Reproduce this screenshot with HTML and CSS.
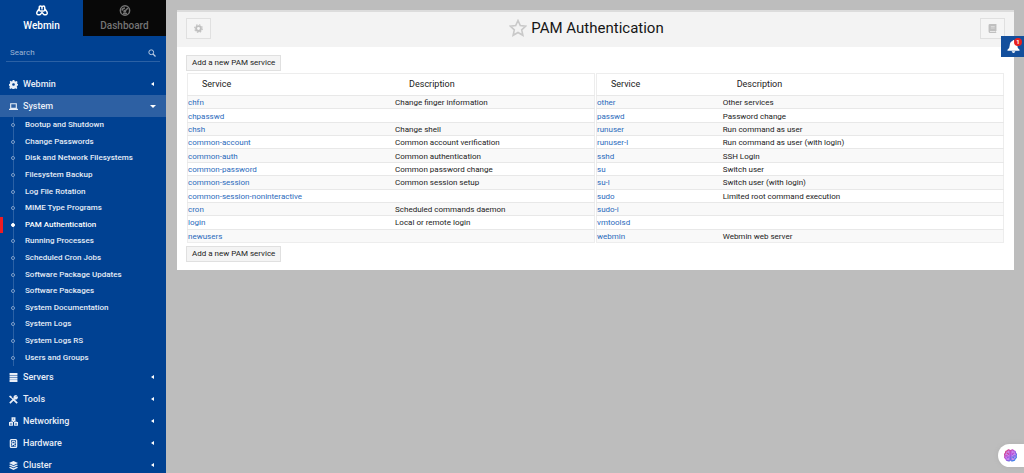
FILE: index.html
```html
<!DOCTYPE html>
<html lang="en">
<head>
<meta charset="utf-8">
<title>PAM Authentication</title>
<link rel="stylesheet" href="styles.css">
</head>
<body>
<div class="app">
<aside class="sidebar">
  <nav class="tabs">
    <a class="tab tab-active" href="#">
      <svg class="tab-icon" viewBox="0 0 24 22" fill="none" stroke="currentColor" stroke-width="2.800" stroke-linejoin="round"><path d="M6.500 12V4.500Q6.500 2 9 2t3 2.500Q12.500 2 15 2t2.500 2.500V12M6 8l-4 6q-1.500 4 1 5t5.500 0l3.500-4 3.500 4q3 1 5.500 0t1-5l-4-6M7 12h10M12 4v5"/></svg>
      <span>Webmin</span>
    </a>
    <a class="tab tab-dark" href="#">
      <svg class="tab-icon" viewBox="0 0 24 22" fill="none" stroke="currentColor" stroke-width="3"><circle cx="12" cy="11" r="9.300"/><path d="M11 13l7-7M6 11q1-5 6-5M8 17h8"/><circle cx="11.500" cy="12.500" r="1.500"/></svg>
      <span>Dashboard</span>
    </a>
  </nav>
  <form class="search">
    <input class="search-input" type="search" placeholder="Search" aria-label="Search">
    <button class="search-button" type="button" aria-label="Run search"><svg class="search-icon" viewBox="0 0 16 16" fill="none" stroke="currentColor" stroke-width="2"><circle cx="6.500" cy="6.500" r="4.800"/><path d="M10 10l5 5" stroke-width="2.600"/></svg></button>
  </form>
  <nav class="menu">
    <a class="item" href="#"><svg class="icon" viewBox="0 0 16 16" fill="currentColor"><path fill-rule="evenodd" d="M6.500 0h3l.5 2 1.500.7 2-1 1.800 1.800-1 2 .7 1.500 1 .3v2.500l-1.500.5-.7 1.700 1 2-1.800 1.800-2-1-1.500.7-.5 1.500h-2.500l-.5-1.500-1.700-.7-2 1-1.800-1.800 1-2L1 10.500l-1-.5V7l1.500-.5.7-1.500-1-1.700L3 1.500l1.700 1L6 2zM8 5.600a2.400 2.400 0 100 4.800 2.400 2.400 0 000-4.800z"/></svg><span>Webmin</span><i class="caret"></i></a>
    <a class="item item-open" href="#"><svg class="icon" viewBox="0 0 16 16" fill="none" stroke="currentColor" stroke-width="2"><path d="M3 3h10v8H3zM0 13h16"/></svg><span>System</span><i class="caret caret-down"></i></a>
    <ul class="submenu">
      <li class="sub"><a href="#">Bootup and Shutdown</a></li>
      <li class="sub"><a href="#">Change Passwords</a></li>
      <li class="sub"><a href="#">Disk and Network Filesystems</a></li>
      <li class="sub"><a href="#">Filesystem Backup</a></li>
      <li class="sub"><a href="#">Log File Rotation</a></li>
      <li class="sub"><a href="#">MIME Type Programs</a></li>
      <li class="sub sub-active"><a href="#">PAM Authentication</a></li>
      <li class="sub"><a href="#">Running Processes</a></li>
      <li class="sub"><a href="#">Scheduled Cron Jobs</a></li>
      <li class="sub"><a href="#">Software Package Updates</a></li>
      <li class="sub"><a href="#">Software Packages</a></li>
      <li class="sub"><a href="#">System Documentation</a></li>
      <li class="sub"><a href="#">System Logs</a></li>
      <li class="sub"><a href="#">System Logs RS</a></li>
      <li class="sub"><a href="#">Users and Groups</a></li>
    </ul>
    <a class="item" href="#"><svg class="icon" viewBox="0 0 16 16" fill="currentColor"><path d="M1 0h14v4H1zM1 4.700h14v3H1zM1 8.400h14v3H1zM1 12.200h14V16H1z"/></svg><span>Servers</span><i class="caret"></i></a>
    <a class="item" href="#"><svg class="icon" viewBox="0 0 16 16" fill="none" stroke="currentColor"><path stroke-width="3" d="M1.500 14.500l9-9M9 9l5.500 5.500"/><path stroke-width="2" d="M1.500 2l6 6M14.800 2.500L12 5l-1.500-1.500L12.500 1Q9 1 9 5l2 2q4 0 4-4"/><path stroke-width="3" d="M1 2l3 2"/></svg><span>Tools</span><i class="caret"></i></a>
    <a class="item" href="#"><svg class="icon" viewBox="0 0 16 16" fill="currentColor"><path fill-rule="evenodd" d="M4.500.5h7V7H8.900v.8h4.600V9H16v6.500H9V9h2.500v-.2h-7V9H7v6.500H0V9h2.500V7.800h4.600V7H4.500zM7 3v1.500h2V3zM2 11.500v1.800h3v-1.800zM11 11.500v1.800h3v-1.800z"/></svg><span>Networking</span><i class="caret"></i></a>
    <a class="item" href="#"><svg class="icon" viewBox="0 0 16 16"><rect x="2.500" y="1.200" width="11" height="13.600" rx="1.500" fill="none" stroke="currentColor" stroke-width="2.400"/><circle cx="8" cy="6.800" r="2.800" fill="none" stroke="currentColor" stroke-width="1.800"/><path d="M8 7l-3 5M9 12h3" stroke="currentColor" stroke-width="2"/></svg><span>Hardware</span><i class="caret"></i></a>
    <a class="item" href="#"><svg class="icon" viewBox="0 0 16 16" fill="currentColor"><path d="M8 0l8 3.700-8 3.800L0 3.700zM2 6l6 2.800L14 6l2 1.500-8 4-8-4zM2 10.300l6 2.800 6-2.800 2 1.500L8 16l-8-4.200z"/></svg><span>Cluster</span><i class="caret"></i></a>
  </nav>
</aside>
<main class="content">
  <section class="panel">
    <header class="panel-head">
      <button class="tool" type="button" aria-label="Module config"><svg class="tool-icon" viewBox="0 0 16 16" fill="none" stroke="currentColor"><circle cx="8" cy="8" r="4.300" stroke-width="3.400"/><circle cx="8" cy="8" r="6.800" stroke-width="2" stroke-dasharray="2.700 2.640"/></svg></button>
      <h1 class="title"><svg class="star" viewBox="0 0 18 18" fill="none" stroke="currentColor" stroke-width="1.600"><path d="M9 1.500l2.300 5 5.500.6-4.100 3.700 1.200 5.500L9 13.500l-4.900 2.800 1.200-5.500L1.200 7.100l5.500-.6z"/></svg>PAM Authentication</h1>
      <button class="tool" type="button" aria-label="Help"><svg class="tool-icon" viewBox="0 0 16 16"><path fill="currentColor" fill-rule="evenodd" d="M3 0h12v12.500h-1V15h1v1H3q-2-.5-2-2.500V2q0-2 2-2zM5 4v1h7V4zM5 6.500v1h7v-1zM3.500 12.800v1.500H13v-1.500z"/></svg></button>
    </header>
    <div class="panel-body">
      <button class="add" type="button">Add a new PAM service</button>
      <div class="tables">
        <table class="services">
          <thead><tr><th class="name-wide">Service</th><th>Description</th></tr></thead>
          <tbody>
          <tr><td><a href="#">chfn</a></td><td>Change finger information</td></tr>
          <tr><td><a href="#">chpasswd</a></td><td></td></tr>
          <tr><td><a href="#">chsh</a></td><td>Change shell</td></tr>
          <tr><td><a href="#">common-account</a></td><td>Common account verification</td></tr>
          <tr><td><a href="#">common-auth</a></td><td>Common authentication</td></tr>
          <tr><td><a href="#">common-password</a></td><td>Common password change</td></tr>
          <tr><td><a href="#">common-session</a></td><td>Common session setup</td></tr>
          <tr><td><a href="#">common-session-noninteractive</a></td><td></td></tr>
          <tr><td><a href="#">cron</a></td><td>Scheduled commands daemon</td></tr>
          <tr><td><a href="#">login</a></td><td>Local or remote login</td></tr>
          <tr><td><a href="#">newusers</a></td><td></td></tr>
          </tbody>
        </table>
        <table class="services">
          <thead><tr><th class="name-narrow">Service</th><th>Description</th></tr></thead>
          <tbody>
          <tr><td><a href="#">other</a></td><td>Other services</td></tr>
          <tr><td><a href="#">passwd</a></td><td>Password change</td></tr>
          <tr><td><a href="#">runuser</a></td><td>Run command as user</td></tr>
          <tr><td><a href="#">runuser-l</a></td><td>Run command as user (with login)</td></tr>
          <tr><td><a href="#">sshd</a></td><td>SSH Login</td></tr>
          <tr><td><a href="#">su</a></td><td>Switch user</td></tr>
          <tr><td><a href="#">su-l</a></td><td>Switch user (with login)</td></tr>
          <tr><td><a href="#">sudo</a></td><td>Limited root command execution</td></tr>
          <tr><td><a href="#">sudo-i</a></td><td></td></tr>
          <tr><td><a href="#">vmtoolsd</a></td><td></td></tr>
          <tr><td><a href="#">webmin</a></td><td>Webmin web server</td></tr>
          </tbody>
        </table>
      </div>
      <button class="add" type="button">Add a new PAM service</button>
    </div>
  </section>
</main>
</div>
<button class="alerts" type="button" aria-label="Notifications">
  <svg class="bell" viewBox="0 0 14 14" fill="currentColor"><path d="M7 0q1 0 1 1 3 .8 3 4.500 0 3.500 2.500 5V11.500H.5V10.500Q3 9 3 5.500 3 1.800 6 1 6 0 7 0zM5 12.200h4Q8.500 14 7 14t-2-1.800z"/></svg>
  <span class="badge">1</span>
</button>
<button class="assistant" type="button" aria-label="Assistant">
  <svg class="brain" viewBox="0 0 14 14" fill="none" stroke-width="1.300">
    <defs><linearGradient id="tint" x1="0" x2="1" y1="0" y2="1"><stop offset="0" stop-color="#e0406a"/><stop offset=".45" stop-color="#b64fdd"/><stop offset="1" stop-color="#1590ee"/></linearGradient></defs>
    <path fill="#c98aee" stroke="url(#tint)" d="M6.500 1.500Q4.500 0 3.500 2 1.500 2 1.700 4.200 0 5.500 1 7.500 0 9.500 2 10.500q.5 2.500 2.500 2 1.500.8 2-.5zM7.500 1.500q2-1.500 3 .5 2 0 1.800 2.200 1.700 1.300.7 3.300 1 2-1 3-.5 2.500-2.500 2-1.500.8-2-.5z"/>
    <path stroke="url(#tint)" d="M3 4.500q2 0 2 2M1.500 7.500h2.500M3.500 10q0-1.500 2-1.500M11 4.500q-2 0-2 2M12.500 7.500H10M10.500 10q0-1.500-2-1.500"/>
  </svg>
</button>
</body>
</html>
```
FILE: styles.css
```css
*, ::before { box-sizing: border-box; }
body { margin: 0; background: #bdbdbd; color: #222; font: 8px/12px Roboto, "Liberation Sans", sans-serif; }
button, input { font: inherit; color: inherit; margin: 0; border-radius: 0; }
a { text-decoration: none; color: #2a6abb; }
svg { display: block; flex: none; }

.app { display: flex; align-items: stretch; height: 100vh; }
.sidebar { width: 166px; flex: none; overflow: hidden; background: #004192; color: #e8eef7; }

.tabs { display: grid; grid-template-columns: 1fr 1fr; }
.tab { display: flex; flex-direction: column; align-items: center; gap: 2px; padding: 5px 0 2px; height: 36px; font-size: 10px; font-weight: 500; line-height: 16px; color: #fff; }
.tab-dark { background: #080808; color: #747474; }
.tab-icon { width: 12px; height: 11px; }

.search { display: flex; align-items: center; justify-content: space-between; margin: 8px 6px 11px; padding: 0 4px; height: 18px; border-bottom: 1px solid #2b61a5; }
.search-input { flex: 1; min-width: 0; padding: 0; border: 0; background: none; outline: 0; appearance: none; }
.search-input::placeholder { color: #9db4d4; opacity: 1; }
.search-button { padding: 0; border: 0; background: none; color: #b9cbe3; }
.search-icon { width: 8px; height: 8px; }

.item { display: flex; align-items: center; gap: 5px; height: 22px; padding: 0 10px 0 9px; color: #e8eef7; font-size: 9px; font-weight: 500; }
.item-open { background: #2d60a3; }
.icon { width: 9px; height: 9px; }
.caret { margin-left: auto; border: solid transparent; border-width: 2px 3px 2px 0; border-right-color: #fff; margin-right: 2px; }
.caret-down { border-width: 3px 3px 0; border-color: #fff transparent transparent; margin-right: 0; }

.submenu { display: grid; grid-auto-rows: 1fr; min-height: 249px; margin: 0; padding: 0; list-style: none; background: linear-gradient(#2b61a5, #2b61a5) 13px 0 / 1px 100% no-repeat; }
.sub { display: flex; align-items: center; gap: 10px; padding-left: 11px; font-weight: 500; }
.sub::before { content: ""; width: 4px; height: 4px; border: 1px solid #80a0c9; border-radius: 50%; background: #004192; }
.sub a { color: #e4ecf6; }
.sub-active { padding-left: 8px; border-left: 3px solid #ed1c24; }
.sub-active::before { background: #fff; border-color: #fff; }
.sub-active a { color: #fff; }

.content { flex: 1; min-width: 0; padding: 10px 10px 0 11px; }
.panel { background: #fff; border-top: 2px solid #dcdcdc; }
.panel-head { display: flex; align-items: center; justify-content: space-between; height: 35px; padding: 0 9px 4px 9px; background: #f3f3f3; }
.tool { display: grid; place-items: center; width: 25px; height: 21px; margin-top: 2px; padding: 0; border: 1px solid #e0e0e0; background: #f5f5f5; color: #c0c0c0; }
.tool-icon { width: 9px; height: 9px; }
.title { display: flex; align-items: center; gap: 4px; margin: 0; padding-right: 18px; font-size: 15px; font-weight: 400; line-height: 20px; color: #161616; }
.star { width: 18px; height: 18px; color: #c9c9c9; }

.panel-body { display: flex; flex-direction: column; align-items: flex-start; padding: 8px 10px 8px 9px; }
.add { height: 16px; padding: 0 5px; border: 1px solid #e0e0e0; background: #f4f4f4; color: #222; line-height: 14px; }
.tables { display: grid; grid-template-columns: 1fr 1fr; gap: 1px; align-self: stretch; margin: 2px 0 3px 1px; }
.services { width: 100%; height: 170px; border-collapse: collapse; table-layout: fixed; border: 1px solid #ededed; }
.services th { height: 22px; padding: 0 14px 2px; text-align: left; font-size: 9px; font-weight: 400; }
.services td { padding: 1px 0 0; border-top: 1px solid #e8e8e8; line-height: 11px; }
.services tbody tr:nth-child(odd) { background: #f9f9f9; }
.name-wide { width: 51%; }
.name-narrow { width: 31%; }

.alerts { position: absolute; top: 36px; right: 0; width: 23px; height: 21px; padding: 0; border: 0; background: #134f9c; color: #fff; }
.bell { width: 13px; height: 13px; margin-left: 6px; }
.badge { position: absolute; top: 2px; right: 2px; width: 8px; height: 8px; border-radius: 50%; background: #e8211f; font-size: 6px; font-weight: 700; line-height: 8px; text-align: center; }
.assistant { position: fixed; right: 0; bottom: 6px; display: flex; align-items: center; width: 26px; height: 23px; padding: 0 6px; border: 0; border-radius: 12px 0 0 12px; background: #fff; box-shadow: 0 0 4px #9995; }
.brain { width: 13px; height: 13px; }
```
